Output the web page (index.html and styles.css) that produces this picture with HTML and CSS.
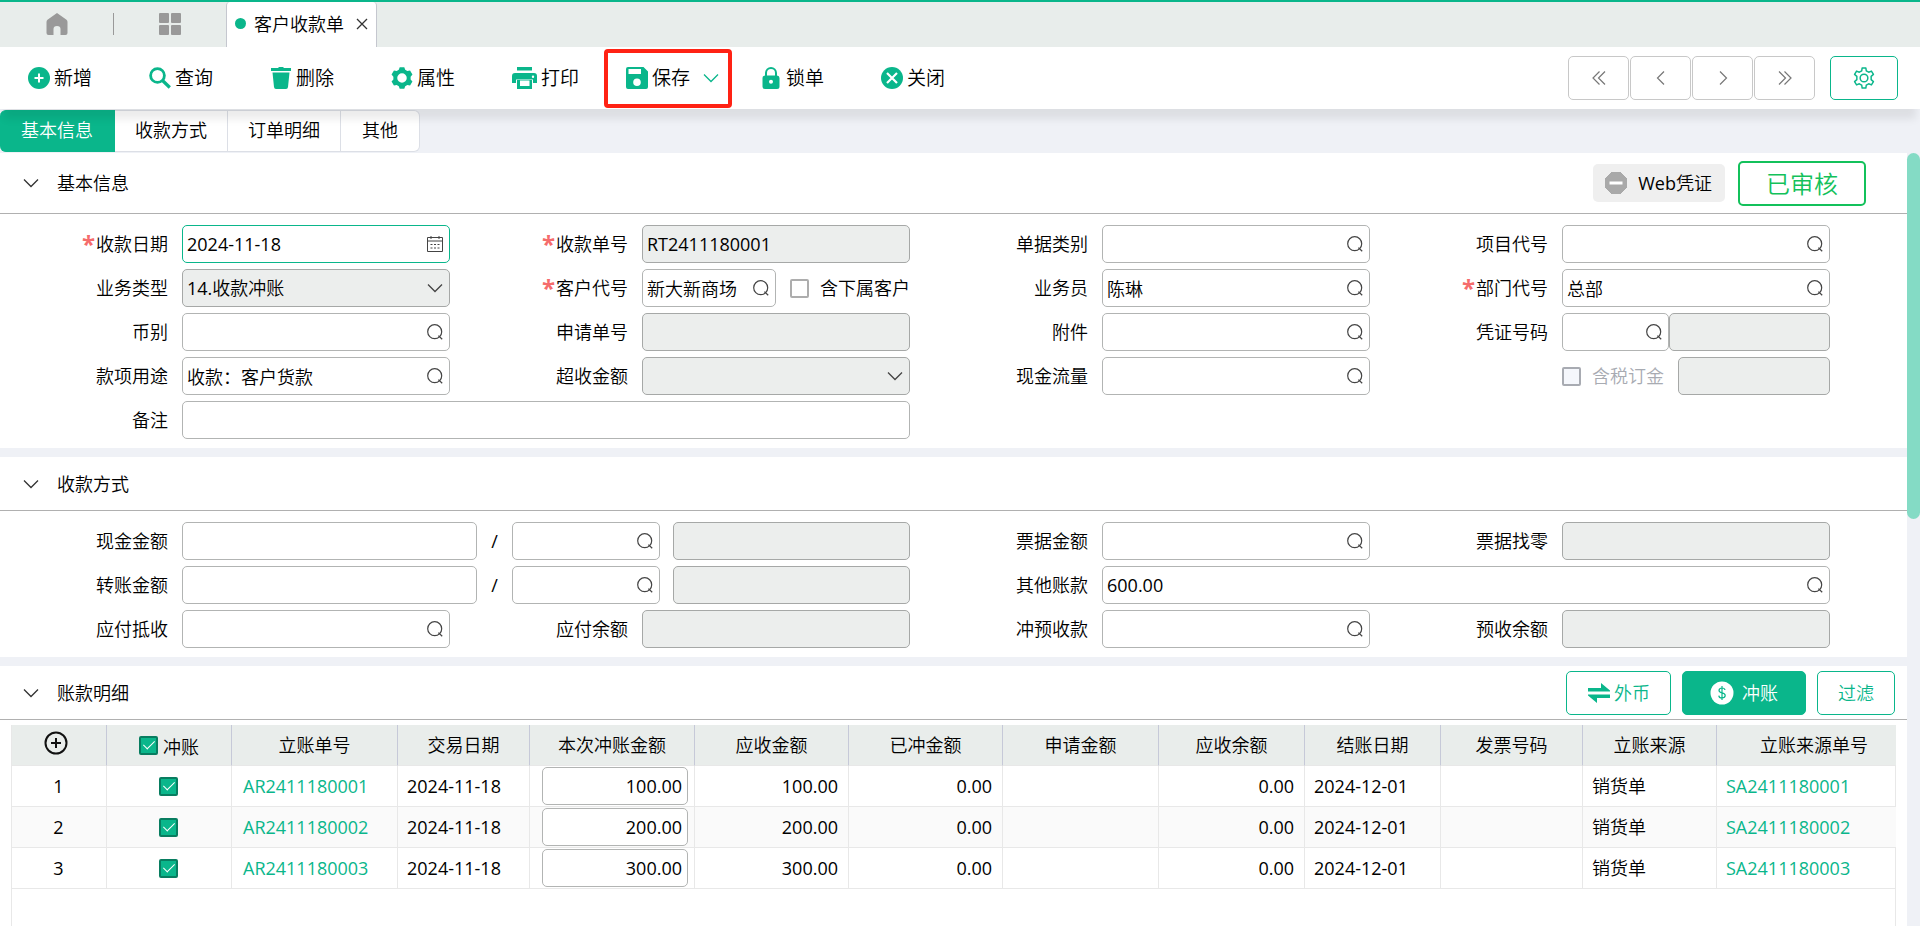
FILE: index.html
```html
<!DOCTYPE html>
<html lang="zh-CN">
<head>
<meta charset="utf-8">
<title>客户收款单</title>
<link rel="stylesheet" href="styles.css">
</head>
<body>
<svg class="defs" aria-hidden="true">
  <symbol id="i-search" viewBox="0 0 16 16"><circle cx="7.7" cy="7.7" r="7" fill="none" stroke="#444" stroke-width="1.2"/><path d="M11.4 11.6l3.8 3.6" fill="none" stroke="#444" stroke-width="1.3"/></symbol>
  <symbol id="i-down" viewBox="0 0 16 16"><path d="M1 4.5l7 7 7-7" fill="none" stroke="currentColor" stroke-width="1.3"/></symbol>
</svg>

<nav class="tabbar">
  <button class="nav-icon" aria-label="首页"><svg width="22" height="24" viewBox="0 0 22 24"><path d="M11 1L1.500 7.800Q.5 8.600.5 10v11Q.5 23 2.500 23H7.500v-6q0-3 3.500-3t3.500 3v6h5q2 0 2-2V10q0-1.400-1-2.200z" fill="#999"/></svg></button>
  <span class="bar-line"></span>
  <button class="nav-icon" aria-label="应用"><svg width="24" height="24" viewBox="0 0 24 24" fill="#999"><rect x="1" y="1" width="10" height="10" rx="1"/><rect x="13" y="1" width="10" height="10" rx="1"/><rect x="1" y="13" width="10" height="10" rx="1"/><rect x="13" y="13" width="10" height="10" rx="1"/></svg></button>
  <div class="page-tab"><span class="dot"></span><span>客户收款单</span><button class="tab-close" aria-label="关闭标签"><svg width="12" height="12" viewBox="0 0 12 12"><path d="M1 1l10 10M11 1L1 11" stroke="#333" stroke-width="1.3"/></svg></button></div>
</nav>

<header class="toolbar">
  <button class="tool"><svg width="22" height="22" viewBox="0 0 22 22"><circle cx="11" cy="11" r="11"/><path d="M11 6.500v9M6.500 11h9" stroke="#fff" stroke-width="2"/></svg>新增</button>
  <button class="tool"><svg width="22" height="22" viewBox="0 0 22 22"><circle cx="8.500" cy="8.500" r="6.900" fill="none" stroke="#0ab68b" stroke-width="2.800"/><path d="M13.500 13.500l7.300 7" stroke="#0ab68b" stroke-width="3.200"/></svg>查询</button>
  <button class="tool"><svg width="22" height="22" viewBox="0 0 22 22"><path d="M1 1h7l1-1h4l1 1h7v3H1zM2.500 5.500h17L18 20q-.2 2-2 2H6q-1.800 0-2-2z"/></svg>删除</button>
  <button class="tool"><svg width="22" height="22" viewBox="0 0 24 24"><path fill-rule="evenodd" d="M8.500 3L9.500.2h5L15.500 3l2.300 1.400 3-.6 2.600 4.300-2 2.400v3l2 2.400-2.600 4.300-3-.6-2.300 1.400-1 2.800h-5l-1-2.800-2.300-1.400-3 .6-2.600-4.300 2-2.400v-3l-2-2.400 2.600-4.300 3 .6zM12 6.800a5.200 5.200 0 1 0 0 10.400 5.200 5.200 0 0 0 0-10.400z"/></svg>属性</button>
  <button class="tool"><svg width="25" height="22" viewBox="0 0 25 22"><path fill-rule="evenodd" d="M5 0h15v3.500H5zM3 6h19q3 0 3 3v7h-4v-3.500H4V16H0V9q0-3 3-3zM21 8.500a1.200 1.200 0 1 0 0 2.400 1.200 1.200 0 0 0 0-2.400zM5 12h15v10H5zM8 13.500V19h9.500v-5.500z"/></svg>打印</button>
  <div class="save-group">
    <button class="tool"><svg width="22" height="22" viewBox="0 0 22 22"><path fill-rule="evenodd" d="M2 0h15.500L22 4.500V20q0 2-2 2H2q-2 0-2-2V2Q0 0 2 0zM2.500 2v5H15V2zM11 11.500a3.800 3.800 0 1 0 0 7.600 3.800 3.800 0 0 0 0-7.600z"/></svg>保存</button>
    <button class="save-more" aria-label="更多保存"><svg width="16" height="16"><use href="#i-down"/></svg></button>
  </div>
  <button class="tool"><svg width="22" height="22" viewBox="0 0 22 22"><path fill-rule="evenodd" d="M5 8.500V6a6 6 0 0 1 12 0v2.500q2.500.2 2.500 2.500v8.500q0 2.500-2.500 2.500H5q-2.500 0-2.500-2.500V11q0-2.300 2.500-2.500zM7 8.500h8V6a4 4 0 0 0-8 0zM11 12.800a2 2 0 1 0 0 4 2 2 0 0 0 0-4z"/></svg>锁单</button>
  <button class="tool"><svg width="22" height="22" viewBox="0 0 22 22"><circle cx="11" cy="11" r="11"/><path d="M6 6l10 10M16 6L6 16" stroke="#fff" stroke-width="2.200"/></svg>关闭</button>
  <div class="pager">
    <button aria-label="首张"><svg width="16" height="16" viewBox="0 0 16 16"><path d="M8.500 1.500L2 8l6.500 6.500M14 1.500L7.500 8l6.500 6.500"/></svg></button>
    <button aria-label="上一张"><svg width="16" height="16" viewBox="0 0 16 16"><path d="M11 1.500L4.500 8l6.500 6.500"/></svg></button>
    <button aria-label="下一张"><svg width="16" height="16" viewBox="0 0 16 16"><path d="M5 1.500L11.500 8 5 14.500"/></svg></button>
    <button aria-label="末张"><svg width="16" height="16" viewBox="0 0 16 16"><path d="M2 1.500L8.500 8 2 14.500M7.500 1.500L14 8l-6.500 6.500"/></svg></button>
  </div>
  <button class="settings" aria-label="设置"><svg width="22" height="22" viewBox="0 0 24 24" fill="none" stroke="#0ab68b" stroke-width="1.600"><path stroke-linejoin="round" d="M9.500 4.200L10 1h4l.5 3.200 2.600 1.500 3-1.200 2.200 3.600-2.500 2.100v3.600l2.500 2.100-2.200 3.600-3-1.200-2.600 1.500L14 23h-4l-.5-3.200-2.600-1.500-3 1.200-2.200-3.600 2.500-2.100v-3.600L1.700 8.100l2.200-3.600 3 1.200z"/><circle cx="12" cy="12" r="4.200"/></svg></button>
</header>

<div class="form-tabs">
  <button class="form-tab active">基本信息</button><button class="form-tab">收款方式</button><button class="form-tab">订单明细</button><button class="form-tab">其他</button>
</div>

<div class="scroller">
<main class="content">
  <section class="panel">
    <div class="panel-head tall">
      <svg class="fold" width="16" height="16"><use href="#i-down"/></svg><h2>基本信息</h2>
      <button class="voucher"><svg width="22" height="22" viewBox="0 0 22 22"><path d="M7 0h8l7 7v8l-7 7H7l-7-7V7z" fill="#a9a9a9" stroke="#a9a9a9" stroke-linejoin="round"/><path d="M4.500 11h13" stroke="#fff" stroke-width="3"/></svg>Web凭证</button>
      <span class="stamp">已审核</span>
    </div>
    <div class="form">
      <div class="item"><label for="f1"><i>*</i>收款日期</label><span class="box focus"><input id="f1" value="2024-11-18"><svg width="16" height="16" viewBox="0 0 16 16" fill="none" stroke="#444"><path d="M.5 1.500h15v14H.5zM.5 5h15M4 0v3M12 0v3"/><path d="M3.500 8.500h9M3.500 12h9" stroke-dasharray="2 1.500"/></svg></span></div>
      <div class="item"><label for="f2"><i>*</i>收款单号</label><span class="box off"><input id="f2" value="RT2411180001" disabled></span></div>
      <div class="item"><label for="f3">单据类别</label><span class="box"><input id="f3"><svg width="16" height="16"><use href="#i-search"/></svg></span></div>
      <div class="item"><label for="f4">项目代号</label><span class="box"><input id="f4"><svg width="16" height="16"><use href="#i-search"/></svg></span></div>

      <div class="item"><label for="f5">业务类型</label><span class="box off"><select id="f5" disabled><option>14.收款冲账</option></select><svg width="16" height="16"><use href="#i-down"/></svg></span></div>
      <div class="item"><label for="f6"><i>*</i>客户代号</label><span class="box"><input id="f6" value="新大新商场"><svg width="16" height="16"><use href="#i-search"/></svg></span><span class="tick after"><input type="checkbox" id="c1"><label for="c1">含下属客户</label></span></div>
      <div class="item"><label for="f7">业务员</label><span class="box"><input id="f7" value="陈琳"><svg width="16" height="16"><use href="#i-search"/></svg></span></div>
      <div class="item"><label for="f8"><i>*</i>部门代号</label><span class="box"><input id="f8" value="总部"><svg width="16" height="16"><use href="#i-search"/></svg></span></div>

      <div class="item"><label for="f9">币别</label><span class="box"><input id="f9"><svg width="16" height="16"><use href="#i-search"/></svg></span></div>
      <div class="item"><label for="f10">申请单号</label><span class="box off"><input id="f10" disabled></span></div>
      <div class="item"><label for="f11">附件</label><span class="box"><input id="f11"><svg width="16" height="16"><use href="#i-search"/></svg></span></div>
      <div class="item"><label for="f12">凭证号码</label><span class="box w2"><input id="f12"><svg width="16" height="16"><use href="#i-search"/></svg></span><span class="box off w3"><input aria-label="凭证号码后段" disabled></span></div>

      <div class="item"><label for="f13">款项用途</label><span class="box"><input id="f13" value="收款：客户货款"><svg width="16" height="16"><use href="#i-search"/></svg></span></div>
      <div class="item"><label for="f14">超收金额</label><span class="box off"><select id="f14" disabled><option></option></select><svg width="16" height="16"><use href="#i-down"/></svg></span></div>
      <div class="item"><label for="f15">现金流量</label><span class="box"><input id="f15"><svg width="16" height="16"><use href="#i-search"/></svg></span></div>
      <div class="item bare"><span class="tick before"><input type="checkbox" id="c2" disabled><label for="c2">含税订金</label></span><span class="box off"><input aria-label="含税订金金额" disabled></span></div>

      <div class="item span2"><label for="f16">备注</label><span class="box"><input id="f16"></span></div>
    </div>
  </section>

  <section class="panel">
    <div class="panel-head"><svg class="fold" width="16" height="16"><use href="#i-down"/></svg><h2>收款方式</h2></div>
    <div class="form">
      <div class="item span2"><label for="g1">现金金额</label><span class="box p1"><input id="g1"></span><span class="slash">/</span><span class="box p2"><input aria-label="现金账户"><svg width="16" height="16"><use href="#i-search"/></svg></span><span class="box off p3"><input aria-label="现金账户名称" disabled></span></div>
      <div class="item"><label for="g2">票据金额</label><span class="box"><input id="g2"><svg width="16" height="16"><use href="#i-search"/></svg></span></div>
      <div class="item"><label for="g3">票据找零</label><span class="box off"><input id="g3" disabled></span></div>

      <div class="item span2"><label for="g4">转账金额</label><span class="box p1"><input id="g4"></span><span class="slash">/</span><span class="box p2"><input aria-label="转账账户"><svg width="16" height="16"><use href="#i-search"/></svg></span><span class="box off p3"><input aria-label="转账账户名称" disabled></span></div>
      <div class="item span2"><label for="g5">其他账款</label><span class="box"><input id="g5" value="600.00"><svg width="16" height="16"><use href="#i-search"/></svg></span></div>

      <div class="item"><label for="g6">应付抵收</label><span class="box"><input id="g6"><svg width="16" height="16"><use href="#i-search"/></svg></span></div>
      <div class="item"><label for="g7">应付余额</label><span class="box off"><input id="g7" disabled></span></div>
      <div class="item"><label for="g8">冲预收款</label><span class="box"><input id="g8"><svg width="16" height="16"><use href="#i-search"/></svg></span></div>
      <div class="item"><label for="g9">预收余额</label><span class="box off"><input id="g9" disabled></span></div>
    </div>
  </section>

  <section class="panel grow">
    <div class="panel-head">
      <svg class="fold" width="16" height="16"><use href="#i-down"/></svg><h2>账款明细</h2>
      <div class="actions">
        <button class="act currency"><svg width="24" height="22" viewBox="0 0 24 22" fill="#0ab68b"><path d="M1 6h13V1l9 7.500v1H1zM23 16H10v5l-9-7.500v-1h22z"/></svg>外币</button>
        <button class="act solid"><svg width="24" height="24" viewBox="0 0 24 24"><circle cx="12" cy="12" r="11.500" fill="#fff"/><path d="M15 9q-.3-2-3-2t-3 2.300q0 2 3 2.500 3.200.5 3.200 2.800 0 2.400-3.200 2.400-3 0-3.200-2.400M12 5v14" fill="none" stroke="#0ab68b" stroke-width="1.200"/></svg>冲账</button>
        <button class="act">过滤</button>
      </div>
    </div>
    <div class="table-wrap">
      <table>
        <colgroup><col class="c95"><col class="c125"><col class="c166"><col class="c132"><col class="c165"><col class="c154"><col class="c154"><col class="c156"><col class="c146"><col class="c136"><col class="c142"><col class="c134"><col class="c179"></colgroup>
        <thead><tr>
          <th class="add-cell"><button class="add" aria-label="添加行"><svg width="24" height="24" viewBox="0 0 24 24" fill="none" stroke="#111" stroke-width="2"><circle cx="12" cy="12" r="10.500"/><path d="M12 7v10M7 12h10"/></svg></button></th>
          <th><span class="head-tick"><input type="checkbox" id="all" checked><label for="all">冲账</label></span></th>
          <th>立账单号</th><th>交易日期</th><th>本次冲账金额</th><th>应收金额</th><th>已冲金额</th><th>申请金额</th><th>应收余额</th><th>结账日期</th><th>发票号码</th><th>立账来源</th><th class="last-head">立账来源单号</th>
        </tr></thead>
        <tbody>
          <tr><td class="mid">1</td><td class="mid"><input type="checkbox" aria-label="冲账 1" checked></td><td class="doc"><a href="#">AR2411180001</a></td><td>2024-11-18</td><td class="edit"><input class="amount" aria-label="本次冲账金额 1" value="100.00"></td><td class="num">100.00</td><td class="num">0.00</td><td></td><td class="num">0.00</td><td>2024-12-01</td><td></td><td>销货单</td><td><a href="#">SA2411180001</a></td></tr>
          <tr><td class="mid">2</td><td class="mid"><input type="checkbox" aria-label="冲账 2" checked></td><td class="doc"><a href="#">AR2411180002</a></td><td>2024-11-18</td><td class="edit"><input class="amount" aria-label="本次冲账金额 2" value="200.00"></td><td class="num">200.00</td><td class="num">0.00</td><td></td><td class="num">0.00</td><td>2024-12-01</td><td></td><td>销货单</td><td><a href="#">SA2411180002</a></td></tr>
          <tr><td class="mid">3</td><td class="mid"><input type="checkbox" aria-label="冲账 3" checked></td><td class="doc"><a href="#">AR2411180003</a></td><td>2024-11-18</td><td class="edit"><input class="amount" aria-label="本次冲账金额 3" value="300.00"></td><td class="num">300.00</td><td class="num">0.00</td><td></td><td class="num">0.00</td><td>2024-12-01</td><td></td><td>销货单</td><td><a href="#">SA2411180003</a></td></tr>
        </tbody>
      </table>
    </div>
  </section>
</main>
<div class="rail"><div class="thumb"></div></div>
</div>
</body>
</html>
```
FILE: styles.css
```css
* { box-sizing: border-box; }
html, body { height: 100%; }
body {
  margin: 0;
  display: flex;
  flex-direction: column;
  overflow: hidden;
  background: #eff1f6;
  color: #000;
  font: 18px/24px "Open Sans", "Noto Sans CJK SC DemiLight", "Noto Sans CJK SC", sans-serif;
}
.defs { display: none; }
button, input, select { font: inherit; color: inherit; }
button { padding: 0; border: 0; background: none; cursor: pointer; }
svg { display: block; flex: none; }
h2 { margin: 0; font-size: 18px; font-weight: 400; }
a { color: #0ab68b; text-decoration: none; }

/* page tabs */
.tabbar {
  flex: none;
  display: flex;
  align-items: center;
  height: 47px;
  padding-bottom: 1px;
  border-top: 2px solid #0ab68b;
  background: #e8edeb;
}
.nav-icon { display: flex; align-items: center; justify-content: center; width: 113px; height: 44px; }
.bar-line { width: 1px; height: 22px; margin-right: -1px; background: #999; }
.page-tab {
  align-self: stretch;
  display: flex;
  align-items: center;
  margin-bottom: -1px;
  padding: 0 8px 2px;
  border: solid #c5c7cf;
  border-width: 0 1px;
  border-radius: 4px 4px 0 0;
  background: #fff;
}
.dot { width: 11px; height: 11px; margin-right: 8px; border-radius: 50%; background: #0ab68b; }
.tab-close { margin-left: 12px; }

/* toolbar */
.toolbar {
  position: relative;
  z-index: 1;
  flex: none;
  display: flex;
  align-items: center;
  gap: 57px;
  height: 62px;
  padding: 0 22px 0 28px;
  background: #fff;
  box-shadow: 0 14px 8px -4px rgba(0, 0, 0, .08);
}
.tool { display: flex; align-items: center; gap: 4px; font-size: 19px; white-space: nowrap; }
.tool svg { fill: #0ab68b; }
.save-group {
  display: flex;
  align-items: center;
  gap: 13px;
  height: 59px;
  margin: 0 -29px 0 -32px;
  padding: 0 9px 0 18px;
  border: 4px solid #ff2214;
  border-radius: 4px;
}
.save-more { color: #0ab68b; }
.pager { display: flex; gap: 1px; margin-left: auto; }
.pager button, .settings {
  display: flex;
  align-items: center;
  justify-content: center;
  width: 61px;
  height: 44px;
  border: 1px solid #c8c8c8;
  border-radius: 5px;
}
.pager svg { fill: none; stroke: #777; stroke-width: 1.2; }
.settings { width: 68px; margin-left: -42px; border-color: #0ab68b; }

/* form tabs */
.form-tabs { flex: none; display: flex; height: 44px; padding: 1px 0; }
.form-tab { padding: 0 20px 2px; border: 1px solid #dcdfe6; border-left: 0; background: #fff; }
.form-tab.active { padding: 0 21px 2px; border-color: #0ab68b; border-radius: 6px 0 0 6px; background: #0ab68b; color: #fff; }
.form-tab:last-child { padding: 0 21px 2px; border-radius: 0 6px 6px 0; }

/* scrolling area */
.scroller { flex: 1; min-height: 0; display: flex; }
.content { flex: 1; min-width: 0; display: flex; flex-direction: column; gap: 9px; overflow: hidden; }
.rail { flex: none; width: 13px; }
.thumb { height: 47.4%; border-radius: 7px; background: #84dbc5; }

.panel { flex: none; background: #fff; }
.panel.grow { flex: 1; display: flex; flex-direction: column; }
.panel-head {
  flex: none;
  display: flex;
  align-items: center;
  height: 54px;
  padding: 0 12px 0 23px;
  border-bottom: 1px solid #b0b0b0;
}
.panel-head.tall { height: 61px; padding-right: 41px; }
.fold { margin-right: 18px; color: #333; }
.voucher {
  display: flex;
  align-items: center;
  gap: 11px;
  height: 38px;
  margin-left: auto;
  padding: 0 13px 0 12px;
  border-radius: 5px;
  background: #efefef;
}
.stamp {
  margin-left: 13px;
  padding: 0 26px;
  border: 2px solid #13c15b;
  border-radius: 5px;
  color: #13c15b;
  font-size: 24px;
  line-height: 41px;
}

/* form fields */
.form {
  display: grid;
  grid-template-columns: repeat(4, minmax(0, 1fr));
  gap: 6px 46px;
  padding: 11px 77px 9px 36px;
}
.item { display: flex; align-items: center; height: 38px; }
.item.bare { padding-left: 146px; }
.span2 { grid-column: span 2; }
.item > label { flex: none; width: 146px; padding-right: 14px; text-align: right; white-space: nowrap; }
.item i { margin-right: 1px; color: #f56c6c; font-size: 24px; font-style: normal; line-height: 20px; font-weight: 700; vertical-align: -2px; }
.box {
  flex: 1 1 0;
  min-width: 0;
  height: 38px;
  display: flex;
  align-items: center;
  padding-right: 6px;
  border: 1px solid #b2b4b3;
  border-radius: 5px;
  background: #fff;
  color: #444;
}
.box.focus { border-color: #0ab68b; }
.box.off { background: #eceeed; border-color: #a6a8a7; }
.box input, .box select {
  flex: 1;
  min-width: 0;
  width: 100%;
  height: 36px;
  padding: 0 4px;
  border: 0;
  outline: 0;
  appearance: none;
  background: transparent;
  color: #000;
  opacity: 1;
}
.w2 { flex-grow: 99; }
.w3 { flex-grow: 153; }
.p1 { flex-grow: 287; }
.p2 { flex-grow: 140; }
.p3 { flex-grow: 229; margin-left: 13px; }
.slash { width: 35px; text-align: center; }

/* tick boxes */
.tick { display: flex; align-items: center; gap: 11px; white-space: nowrap; }
.tick.after { margin-left: 14px; }
.tick.before { margin-right: 14px; color: #a8abb2; }
input[type="checkbox"] {
  flex: none;
  display: inline-grid;
  place-items: center;
  width: 19px;
  height: 19px;
  margin: 0;
  appearance: none;
  border: 2px solid #adadad;
  border-radius: 2px;
  background: #fff;
}
input[type="checkbox"]:disabled { background: #f5f7fc; border-color: #a8abb2; }
input[type="checkbox"]:checked { border-color: #087d60; background: #0ab68b; }
input[type="checkbox"]:checked::after {
  content: "";
  width: 5px;
  height: 10px;
  margin-bottom: 3px;
  border: solid #fff;
  border-width: 0 1px 1px 0;
  transform: rotate(45deg);
}

/* detail buttons */
.actions { display: flex; gap: 11px; margin-left: auto; }
.act {
  display: flex;
  align-items: center;
  justify-content: center;
  height: 44px;
  padding: 0 20px;
  border: 1px solid #0ab68b;
  border-radius: 5px;
  color: #0ab68b;
}
.act.currency { gap: 3px; }
.act.solid { gap: 8px; padding: 0 27px; background: #0ab68b; color: #fff; }

/* detail table */
.table-wrap { flex: 1; margin: 5px 11px 0; border: solid #e8e8e8; border-width: 0 1px; }
table { width: 100%; border-collapse: separate; border-spacing: 0; table-layout: fixed; }
th, td { height: 41px; padding: 0 10px 0 9px; border-right: 1px solid #e8e8e8; border-bottom: 1px solid #e8e8e8; text-align: left; white-space: nowrap; }
th { padding: 0 9px; border-right-color: #c6c9d8; background: #e9edeb; font-weight: 400; text-align: center; }
th:last-child, td:last-child { border-right: 0; }
th.add-cell { padding: 0 16px 4px 9px; }
th.last-head { padding-left: 24px; }
tbody tr:nth-child(even) { background: #fafafa; }
td.mid { text-align: center; }
td.mid input { display: grid; margin: 0 auto; }
td.doc { padding-left: 11px; }
td.num { text-align: right; }
td.edit { padding: 0 6px 0 12px; }
.amount { display: block; width: 100%; height: 38px; padding: 0 5px; border: 1px solid #b2b4b3; border-radius: 5px; background: #fff; text-align: right; }
.head-tick { display: flex; align-items: center; justify-content: center; gap: 5px; }
.head-tick label { padding-top: 4px; }
.add { display: block; margin: 0 auto; }
.c95 { width: 95px; }
.c125 { width: 125px; }
.c132 { width: 132px; }
.c134 { width: 134px; }
.c136 { width: 136px; }
.c142 { width: 142px; }
.c146 { width: 146px; }
.c154 { width: 154px; }
.c156 { width: 156px; }
.c165 { width: 165px; }
.c166 { width: 166px; }
.c179 { width: 179px; }
```
